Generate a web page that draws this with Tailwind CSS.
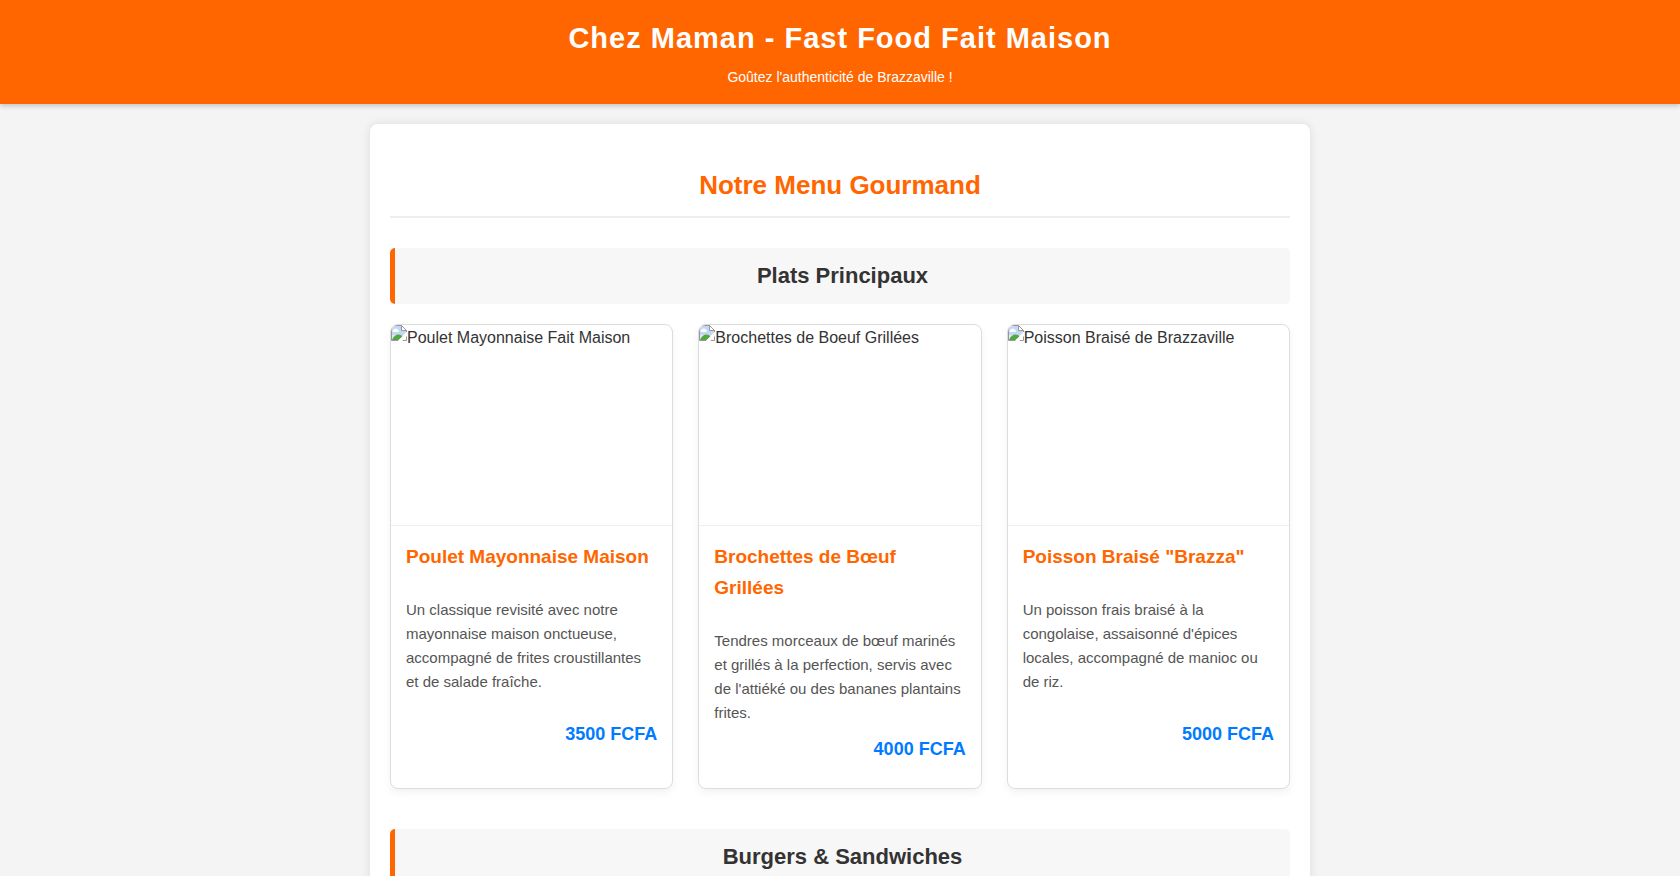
<!DOCTYPE html>
<html lang="fr">
<head>
    <meta charset="UTF-8">
    <meta name="viewport" content="width=device-width, initial-scale=1.0">
    <title>Chez Maman - Fast Food Fait Maison</title>
    <script src="https://cdn.jsdelivr.net/npm/@tailwindcss/browser@4"></script>
</head>
<body class="bg-[#f4f4f4] text-[#333333] text-base font-['Liberation_Sans',Arial,sans-serif]">
    <!-- Placeholder icon shared by the dish pictures -->
    <svg class="hidden" aria-hidden="true">
        <symbol id="no-picture" viewBox="0 0 16 16">
            <path d="M0.5 0.5H10.5L15.5 5.5V7L7 15.5H0.5Z" fill="#c6d7f6"/>
            <path d="M1 10H12L7 15H1Z" fill="#dfe8fb"/>
            <path d="M2 7a1.5 1.5 0 0 1 1-2.500a2 2 0 0 1 3.500 0a1.500 1.500 0 0 1 1 2.500Z" fill="#fff"/>
            <path d="M1 15C2 11.500 5 9.500 7.500 9.500C9.500 9.500 11 10.500 11.500 11.500L7.500 15Z" fill="#53a93f"/>
            <path d="M10.500 0.500V5.500H15.500Z" fill="#fff"/>
            <path d="M7.500 15.500H0.500V0.500H10.500L15.500 5.500V7M10.500 0.500V5.500H15.500M15.500 11V15.500H11.500" fill="none" stroke="#979797"/>
            <path d="M16 7L7 16H11L16 11Z" fill="#fff"/>
        </symbol>
    </svg>

    <header class="bg-[#ff6600] text-white text-center p-[15px] shadow-[0_2px_5px_rgba(0,0,0,0.2)]">
        <h1 class="text-[29px] leading-[46px] font-bold tracking-[1px]">Chez Maman - Fast Food Fait Maison</h1>
        <p class="mt-[5px] text-[14px] leading-[23px]">Goûtez l'authenticité de Brazzaville !</p>
    </header>

    <main class="max-w-[940px] mx-auto my-5 p-5 bg-white rounded-lg shadow-[0_0_10px_rgba(0,0,0,0.1)]">
        <h2 class="mt-[21px] mb-[30px] pb-2.5 text-center text-[26px] leading-[41px] font-bold text-[#ff6600] border-b-2 border-[#eeeeee]">Notre Menu Gourmand</h2>

        <section class="mb-10">
            <h3 class="mb-5 py-2.5 text-center text-[22px] leading-[36px] font-bold bg-[#f7f7f7] border-l-[5px] border-[#ff6600] rounded-[5px]">Plats Principaux</h3>

            <div class="grid grid-cols-1 sm:grid-cols-2 md:grid-cols-3 gap-[25px]">
                <article class="flex flex-col bg-white border border-[#dddddd] rounded-lg overflow-hidden shadow-[0_4px_8px_rgba(0,0,0,0.05)]">
                    <div class="flex items-start h-[201px] leading-[26px] border-b border-[#eeeeee]">
                        <svg class="size-4 shrink-0" aria-hidden="true"><use href="#no-picture"/></svg>
                        <span>Poulet Mayonnaise Fait Maison</span>
                    </div>
                    <div class="flex flex-col flex-1 px-[15px] pt-[15px] pb-[25px]">
                        <h4 class="mb-[26px] text-[19px] leading-[31px] font-bold text-[#ff6600]">Poulet Mayonnaise Maison</h4>
                        <p class="mb-2.5 text-[15px] leading-[24px] text-[#555555]">Un classique revisité avec notre mayonnaise maison onctueuse, accompagné de frites croustillantes et de salade fraîche.</p>
                        <div class="flex flex-1 items-center justify-end text-[18px] leading-[28px] font-bold text-[#007bff]">3500 FCFA</div>
                    </div>
                </article>

                <article class="flex flex-col bg-white border border-[#dddddd] rounded-lg overflow-hidden shadow-[0_4px_8px_rgba(0,0,0,0.05)]">
                    <div class="flex items-start h-[201px] leading-[26px] border-b border-[#eeeeee]">
                        <svg class="size-4 shrink-0" aria-hidden="true"><use href="#no-picture"/></svg>
                        <span>Brochettes de Boeuf Grillées</span>
                    </div>
                    <div class="flex flex-col flex-1 px-[15px] pt-[15px] pb-[25px]">
                        <h4 class="mb-[26px] text-[19px] leading-[31px] font-bold text-[#ff6600]">Brochettes de Bœuf Grillées</h4>
                        <p class="mb-2.5 text-[15px] leading-[24px] text-[#555555]">Tendres morceaux de bœuf marinés et grillés à la perfection, servis avec de l'attiéké ou des bananes plantains frites.</p>
                        <div class="flex flex-1 items-center justify-end text-[18px] leading-[28px] font-bold text-[#007bff]">4000 FCFA</div>
                    </div>
                </article>

                <article class="flex flex-col bg-white border border-[#dddddd] rounded-lg overflow-hidden shadow-[0_4px_8px_rgba(0,0,0,0.05)]">
                    <div class="flex items-start h-[201px] leading-[26px] border-b border-[#eeeeee]">
                        <svg class="size-4 shrink-0" aria-hidden="true"><use href="#no-picture"/></svg>
                        <span>Poisson Braisé de Brazzaville</span>
                    </div>
                    <div class="flex flex-col flex-1 px-[15px] pt-[15px] pb-[25px]">
                        <h4 class="mb-[26px] text-[19px] leading-[31px] font-bold text-[#ff6600]">Poisson Braisé "Brazza"</h4>
                        <p class="mb-2.5 text-[15px] leading-[24px] text-[#555555]">Un poisson frais braisé à la congolaise, assaisonné d'épices locales, accompagné de manioc ou de riz.</p>
                        <div class="flex flex-1 items-center justify-end text-[18px] leading-[28px] font-bold text-[#007bff]">5000 FCFA</div>
                    </div>
                </article>
            </div>
        </section>

        <section class="mb-10">
            <h3 class="mb-5 py-2.5 text-center text-[22px] leading-[36px] font-bold bg-[#f7f7f7] border-l-[5px] border-[#ff6600] rounded-[5px]">Burgers &amp; Sandwiches</h3>
        </section>
    </main>
</body>
</html>
